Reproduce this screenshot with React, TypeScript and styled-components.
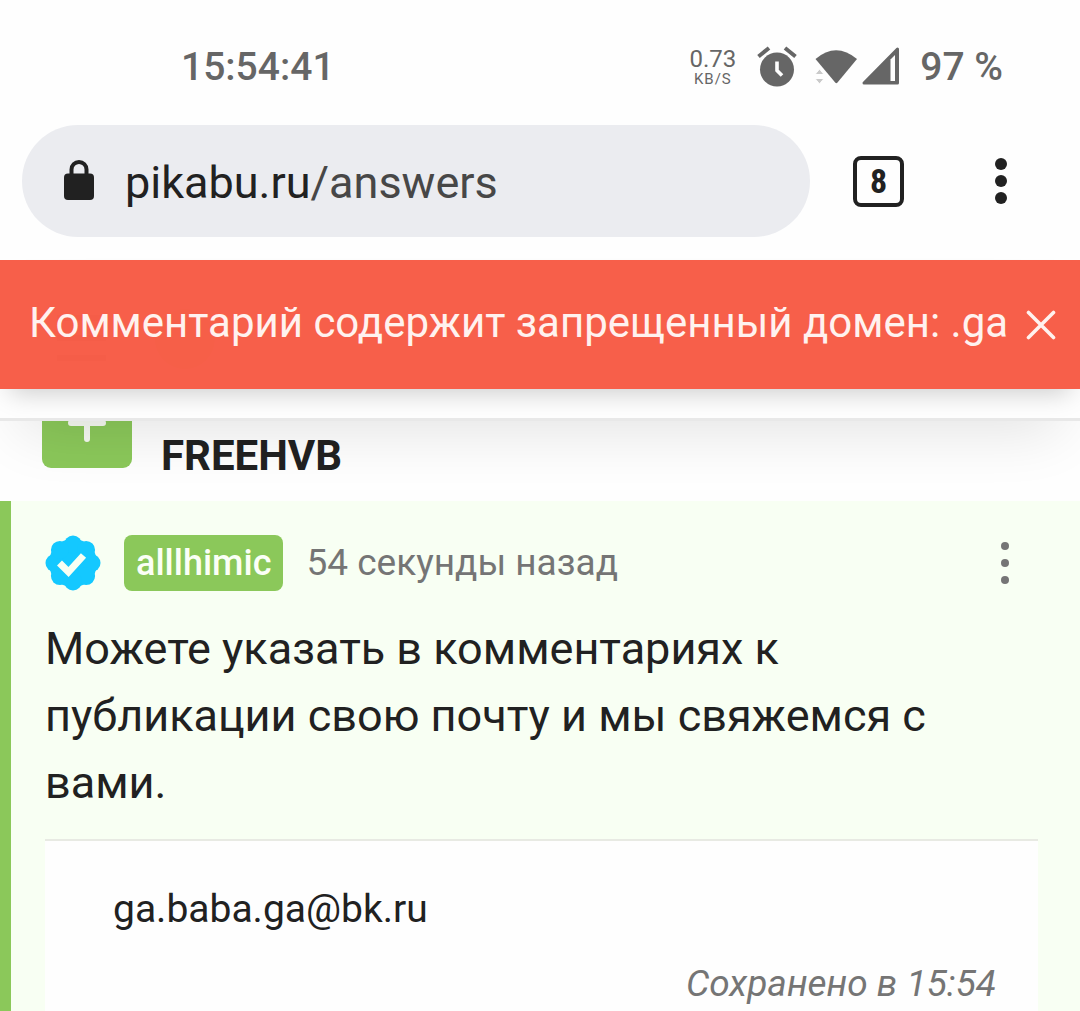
import React from "react";
import styled, { createGlobalStyle } from "styled-components";

const ink = "#212121";
const muted = "#757575";
const status = "#666666";
const green = "#8bc85a";

const GlobalStyle = createGlobalStyle`
  *, *::before, *::after { box-sizing: border-box; }
  body { margin: 0; background: #fefefe; color: ${ink}; font-family: Roboto, "Noto Sans", sans-serif; }
  button { font: inherit; color: inherit; background: none; border: 0; padding: 0; cursor: pointer; }
  svg { display: block; flex: none; }
`;

const Screen = styled.div`
  min-height: 100vh;
  display: flex;
  flex-direction: column;
  overflow: hidden;
`;

const StatusBar = styled.header`
  display: flex;
  align-items: center;
  justify-content: space-between;
  height: 125px;
  padding: 8px 77px 0 181px;
  color: ${status};
  font-size: 39px;
  font-weight: 500;
  line-height: 44px;
`;

const StatusIcons = styled.div`
  display: flex;
  align-items: center;
`;

const NetSpeed = styled.div`
  display: flex;
  flex-direction: column;
  align-items: center;
  margin-right: 20px;
  font-size: 24px;
  font-weight: 400;
  line-height: 24px;
`;

const SpeedUnit = styled.span`
  font-size: 15px;
  line-height: 16px;
  letter-spacing: 1px;
`;

const Connectivity = styled.div`
  display: flex;
  gap: 4px;
  margin-left: 16px;
`;

const Battery = styled.span`
  margin-left: 20px;
`;

const AddressRow = styled.div`
  display: flex;
  align-items: center;
  padding: 0 61px 23px 22px;
`;

const AddressPill = styled.button`
  flex: 1;
  display: flex;
  align-items: center;
  gap: 30px;
  height: 112px;
  padding: 0 41px;
  border-radius: 56px;
  background: #ebecf0;
  font-size: 45px;
  line-height: 56px;
`;

const Url = styled.span`
  padding-top: 4px;
`;

const UrlPath = styled.span`
  color: #474747;
`;

const TabCount = styled.button`
  width: 51px;
  height: 51px;
  margin: 0 79px 0 43px;
  border: 4px solid ${ink};
  border-radius: 8px;
  font-family: "Roboto Condensed", Roboto, sans-serif;
  font-size: 34px;
  font-weight: 700;
  line-height: 42px;
`;

const MenuButton = styled.button`
  display: flex;
  justify-content: center;
  width: 36px;
`;

const SiteHeader = styled.div`
  position: relative;
  z-index: 1;
  display: flex;
  align-items: center;
  height: 161px;
  padding: 0 74px 0 57px;
  border-bottom: 3px solid #e8e8e8;
  background: #fefefe;
  box-shadow: 0 30px 60px -20px rgba(0, 0, 0, 0.11);
`;

const HeaderShapes = styled.svg`
  width: 100%;
  height: 90px;
`;

const Alert = styled.div`
  position: absolute;
  inset: 0 0 auto;
  display: flex;
  align-items: center;
  justify-content: space-between;
  height: 129px;
  padding: 0 24px 0 29px;
  background: rgba(247, 93, 72, 0.99);
  box-shadow: 0 14px 24px -10px rgba(0, 0, 0, 0.2);
  color: #fff2ef;
  font-size: 42px;
  line-height: 56px;
  white-space: nowrap;
`;

const AlertText = styled.span`
  padding-bottom: 4px;
`;

const PostStrip = styled.div`
  display: flex;
  align-items: flex-end;
  gap: 29px;
  height: 80px;
  padding: 0 42px 17px;
  overflow: hidden;
`;

const PlusTile = styled.button`
  display: grid;
  place-items: center;
  flex: none;
  width: 90px;
  height: 90px;
  margin-bottom: 16px;
  border-radius: 9px;
  background: ${green};
`;

const PostTitle = styled.h1`
  margin: 0;
  font-size: 42px;
  font-weight: 700;
  line-height: 56px;
`;

const Comment = styled.article`
  flex: 1;
  display: flex;
  flex-direction: column;
  padding: 34px 42px 0 34px;
  border-left: 11px solid ${green};
  background: #f8fff3;
`;

const CommentHead = styled.div`
  display: flex;
  align-items: center;
  gap: 23px;
  height: 56px;
`;

const UserTag = styled.a`
  padding: 0 12px;
  border-radius: 8px;
  background: ${green};
  color: #fbfff6;
  font-size: 36px;
  font-weight: 500;
  line-height: 56px;
  text-decoration: none;
`;

const Time = styled.time`
  flex: 1;
  color: ${muted};
  font-size: 37px;
  line-height: 56px;
`;

const CommentMenu = styled(MenuButton)`
  margin-right: 15px;
`;

const CommentText = styled.p`
  margin: 24px 0 23px;
  font-size: 45px;
  line-height: 67px;
`;

const Draft = styled.div`
  flex: 1;
  display: flex;
  flex-direction: column;
  padding: 40px 42px 0 68px;
  border-top: 2px solid #e8eae3;
  background: #fefefe;
`;

const DraftInput = styled.input`
  width: 100%;
  height: 56px;
  padding: 0;
  border: 0;
  outline: 0;
  background: transparent;
  color: ${ink};
  font: 400 39px/56px Roboto, "Noto Sans", sans-serif;
`;

const Saved = styled.p`
  margin: 19px 0 0;
  align-self: flex-end;
  color: ${muted};
  font-size: 37px;
  font-style: italic;
  line-height: 56px;
`;

const Dots = ({ radius, step, color }: { radius: number; step: number; color: string }) => (
  <svg width={radius * 2} height={(radius + step) * 2} fill={color} aria-hidden>
    {[0, 1, 2].map((i) => (
      <circle key={i} cx={radius} cy={radius + i * step} r={radius} />
    ))}
  </svg>
);

const AlarmIcon = () => (
  <svg width="42" height="42" viewBox="0 0 42 42" aria-hidden>
    <circle cx="21" cy="23.500" r="17" fill={status} />
    <path d="M2.500 10.500 13 2M39.500 10.500 29 2" stroke={status} strokeWidth="4" />
    <path d="M21 15.500v9l5 5" fill="none" stroke="#fefefe" strokeWidth="3.600" />
  </svg>
);

const WifiIcon = () => (
  <svg width="44" height="40" viewBox="0 0 44 40" aria-hidden>
    <path d="M1.500 12Q22-5.500 43 12L23.500 35.500q-1.200 1.300-2.300 0Z" fill={status} />
    <path d="M1 27.500 5.500 22l4.500 5.500ZM1 31.500h9L5.500 37Z" fill="#cacaca" stroke="#fefefe" strokeWidth="1" />
  </svg>
);

const SignalIcon = () => (
  <svg width="38" height="38" viewBox="0 0 38 38" aria-hidden>
    <path d="M2 36 35.500 2v34Z" fill={status} stroke={status} strokeWidth="3" strokeLinejoin="round" />
    <path d="M28.500 12.500 33 8V34h-4.500Z" fill="#fefefe" />
  </svg>
);

const LockIcon = () => (
  <svg width="32" height="42" viewBox="0 0 32 42" aria-hidden>
    <rect x="1" y="13.500" width="30" height="26.500" rx="4" fill={ink} />
    <path d="M8.500 15V9.500a7.500 7.500 0 0 1 15 0V15" fill="none" stroke={ink} strokeWidth="4" />
  </svg>
);

const VerifiedIcon = () => (
  <svg width="56" height="56" viewBox="0 0 56 56" aria-hidden>
    <g fill="#14c8ff">
      <circle cx="28" cy="28" r="24" />
      {[0, 45, 90, 135, 180, 225, 270, 315].map((a) => (
        <circle key={a} cx="28" cy="9.500" r="9" transform={`rotate(${a} 28 28)`} />
      ))}
    </g>
    <path d="m14.500 28 9 9 15-16.500" fill="none" stroke="#f8fff3" strokeWidth="7" />
  </svg>
);

export default function App() {
  return (
    <>
      <GlobalStyle />
      <Screen>
        <StatusBar>
          <span>15:54:41</span>
          <StatusIcons>
            <NetSpeed>
              0.73
              <SpeedUnit>KB/S</SpeedUnit>
            </NetSpeed>
            <AlarmIcon />
            <Connectivity>
              <WifiIcon />
              <SignalIcon />
            </Connectivity>
            <Battery>97 %</Battery>
          </StatusIcons>
        </StatusBar>

        <AddressRow>
          <AddressPill>
            <LockIcon />
            <Url>
              pikabu.ru<UrlPath>/answers</UrlPath>
            </Url>
          </AddressPill>
          <TabCount>8</TabCount>
          <MenuButton aria-label="Меню">
            <Dots radius={6} step={17} color={ink} />
          </MenuButton>
        </AddressRow>

        <SiteHeader>
          <HeaderShapes viewBox="0 0 950 90" preserveAspectRatio="none" aria-hidden>
            <path d="M0 24h49M0 44h49M0 64h49" stroke="#666666" strokeWidth="6" />
            <circle cx="128" cy="45" r="30" fill={green} />
            {[670, 790, 910].map((x) => (
              <circle key={x} cx={x} cy="45" r="42" fill="#c8c8c8" />
            ))}
          </HeaderShapes>
          <Alert role="alert">
            <AlertText>Комментарий содержит запрещенный домен: .ga</AlertText>
            <button aria-label="Закрыть">
              <svg width="30" height="30" viewBox="0 0 30 30" aria-hidden>
                <path d="m2.500 2.500 25 25m0-25-25 25" stroke="#fff2ef" strokeWidth="3.600" strokeLinecap="round" />
              </svg>
            </button>
          </Alert>
        </SiteHeader>

        <PostStrip>
          <PlusTile aria-label="Плюс">
            <svg width="38" height="38" viewBox="0 0 38 38" aria-hidden>
              <path d="M3 19h32M19 3v32" stroke="#f6f9f2" strokeWidth="6" strokeLinecap="round" />
            </svg>
          </PlusTile>
          <PostTitle>FREEHVB</PostTitle>
        </PostStrip>

        <Comment>
          <CommentHead>
            <VerifiedIcon />
            <UserTag href="#alllhimic">alllhimic</UserTag>
            <Time>54 секунды назад</Time>
            <CommentMenu aria-label="Действия">
              <Dots radius={4} step={17} color={muted} />
            </CommentMenu>
          </CommentHead>
          <CommentText>Можете указать в комментариях к публикации свою почту и мы свяжемся с вами.</CommentText>
          <Draft>
            <DraftInput aria-label="Ответ" defaultValue="ga.baba.ga@bk.ru" />
            <Saved>Сохранено в 15:54</Saved>
          </Draft>
        </Comment>
      </Screen>
    </>
  );
}
